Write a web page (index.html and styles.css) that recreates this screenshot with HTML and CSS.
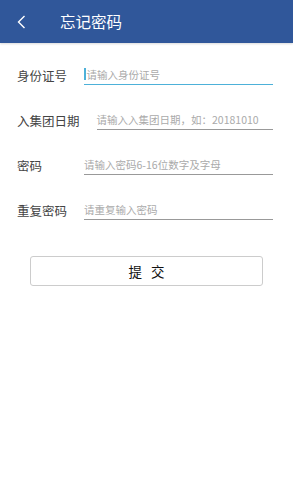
FILE: index.html
```html
<!DOCTYPE html>
<html lang="zh-CN">

<head>
    <meta charset="UTF-8">
    <meta name="viewport" content="width=device-width, initial-scale=1.0">
    <link rel="stylesheet" href="styles.css">
    <title>忘记密码</title>
</head>

<body>
    <div class="header">
        <a href="javascript:;" class="back">
            <svg width="9" height="14" viewBox="0 0 9 14">
                <path d="M7.5 1 L1.5 7 L7.5 13" fill="none" stroke="#fff" stroke-width="1.4" />
            </svg>
        </a>
        <span class="title">忘记密码</span>
    </div>
    <div class="form">
        <div class="row">
            <label class="label">身份证号</label>
            <div class="input focus"><span class="caret"></span>请输入身份证号</div>
        </div>
        <div class="row">
            <label class="label">入集团日期</label>
            <div class="input">请输入入集团日期，如：20181010</div>
        </div>
        <div class="row">
            <label class="label">密码</label>
            <div class="input">请输入密码6-16位数字及字母</div>
        </div>
        <div class="row">
            <label class="label">重复密码</label>
            <div class="input">请重复输入密码</div>
        </div>
        <a href="javascript:;" class="submit">提&nbsp;&nbsp;&nbsp;交</a>
    </div>
</body>

</html>
```

FILE: styles.css
```css
body {
    margin: 0;
    background: #fff;
    font-family: "Noto Sans CJK SC", "Noto Sans", sans-serif;
}

a {
    text-decoration: none;
}

.header {
    display: flex;
    align-items: center;
    height: 43px;
    background-color: #30579a;
    box-shadow: 0 1px 2px rgba(0, 0, 0, .15);
}

.back {
    display: flex;
    align-items: center;
    padding: 0 0 0 17px;
    width: 43px;
}

.title {
    color: #fff;
    font-size: 15.5px;
    line-height: 43px;
}

.form {
    padding: 23px 20px 0 17px;
}

.row {
    display: flex;
    align-items: center;
    height: 19px;
    margin-bottom: 26px;
}

.label {
    min-width: 50px;
    margin-right: 17px;
    font-size: 12.5px;
    color: #444;
    line-height: 19px;
}

.input {
    flex: 1;
    display: flex;
    align-items: center;
    box-sizing: border-box;
    height: 19px;
    padding-bottom: 2px;
    border-bottom: 1px solid #999;
    font-size: 10.5px;
    color: #aaa;
    white-space: nowrap;
}

.input.focus {
    border-bottom: 1.5px solid #4db1d9;
}

.caret {
    display: inline-block;
    width: 1.5px;
    height: 12px;
    margin-right: 1px;
    background-color: #4db1d9;
}

.submit {
    display: block;
    box-sizing: border-box;
    height: 30px;
    margin: 36px 10px 0 13px;
    border: 1px solid #ccc;
    border-radius: 3px;
    text-align: center;
    line-height: 28px;
    font-size: 13.5px;
    color: #111;
}
```
